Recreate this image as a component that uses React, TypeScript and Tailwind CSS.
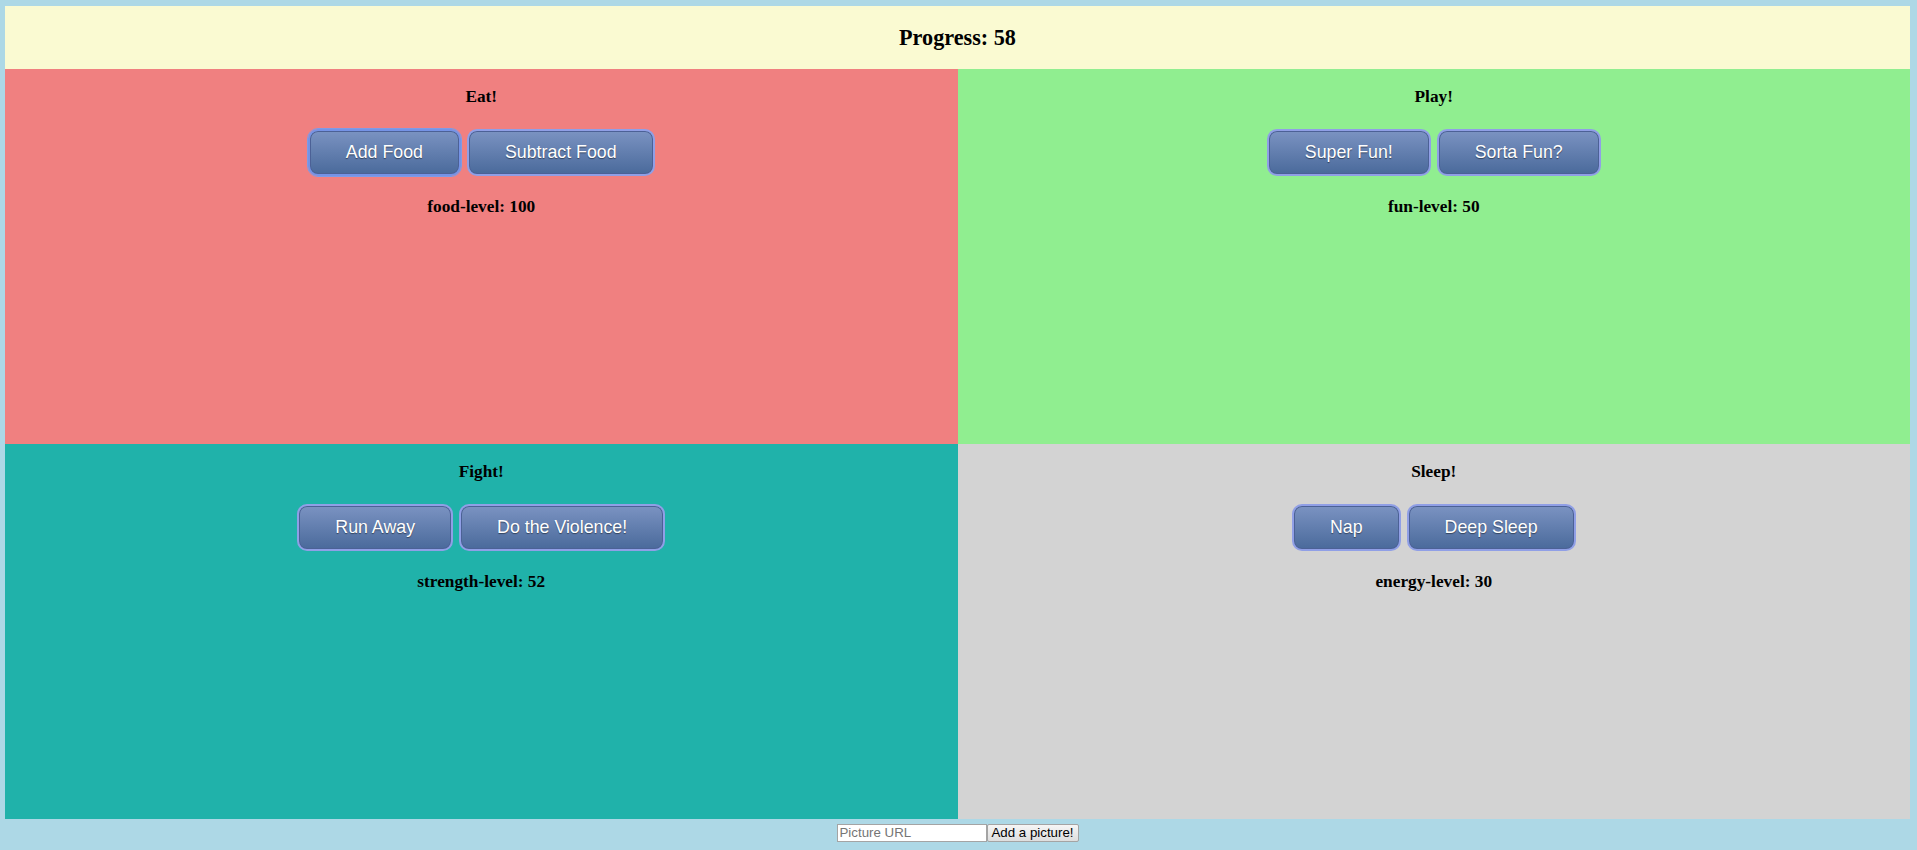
import React from "react";

const serif = { fontFamily: '"Liberation Serif", "Times New Roman", serif' };

function Btn({ label, focused }: { label: string; focused?: boolean }) {
  return (
    <button
      className={
        "h-[47px] px-[36px] rounded-[10px] border-2 text-white text-[17.8px] leading-none bg-gradient-to-b from-[#7b93c2] to-[#4a6a9b] shadow-[inset_0_0_0_1px_#4c6196] [text-shadow:0_1px_1px_rgba(0,0,0,0.45)] " +
        (focused ? "border-[#7593e6] outline outline-1 outline-[#7f9be6]" : "border-[#909fe6]")
      }
      style={{ fontFamily: '"Liberation Sans", Arial, sans-serif' }}
    >
      {label}
    </button>
  );
}

function Quadrant({
  bg,
  title,
  buttons,
  level,
  focusFirst,
}: {
  bg: string;
  title: string;
  buttons: [string, string];
  level: string;
  focusFirst?: boolean;
}) {
  return (
    <div className={"flex flex-col items-center h-[375px] " + bg} style={serif}>
      <h3 className="mt-[18px] text-[17.3px] leading-[20px] font-bold text-black">{title}</h3>
      <div className="mt-[22px] flex gap-[6px]">
        <Btn label={buttons[0]} focused={focusFirst} />
        <Btn label={buttons[1]} />
      </div>
      <div className="mt-[21px] text-[17.3px] leading-[20px] font-bold text-black">{level}</div>
    </div>
  );
}

export default function App() {
  return (
    <div className="min-h-[850px] bg-[#add8e6] pt-[6px] pl-[5px] pr-[7px] pb-[8px]">
      <div
        className="h-[63px] bg-[#fafad2] flex items-center justify-center text-[22.2px] font-bold text-black"
        style={serif}
      >
        Progress: 58
      </div>
      <div className="grid grid-cols-2">
        <Quadrant bg="bg-[#f08080]" title="Eat!" buttons={["Add Food", "Subtract Food"]} level="food-level: 100" focusFirst />
        <Quadrant bg="bg-[#90ee90]" title="Play!" buttons={["Super Fun!", "Sorta Fun?"]} level="fun-level: 50" />
        <Quadrant bg="bg-[#20b2aa]" title="Fight!" buttons={["Run Away", "Do the Violence!"]} level="strength-level: 52" />
        <Quadrant bg="bg-[#d3d3d3]" title="Sleep!" buttons={["Nap", "Deep Sleep"]} level="energy-level: 30" />
      </div>
      <div
        className="mt-[5px] flex justify-center"
        style={{ fontFamily: '"Liberation Sans", Arial, sans-serif' }}
      >
        <input
          placeholder="Picture URL"
          className="w-[150px] h-[18px] bg-white border border-[#a4a4a4] px-[2px] text-[13.3px] text-black placeholder:text-[#757575] outline-none"
        />
        <button className="w-[92px] h-[18px] border border-[#a4a4a4] rounded-[2px] bg-gradient-to-b from-[#f6f6f6] to-[#dedede] text-[13.3px] leading-none text-black">
          Add a picture!
        </button>
      </div>
    </div>
  );
}
